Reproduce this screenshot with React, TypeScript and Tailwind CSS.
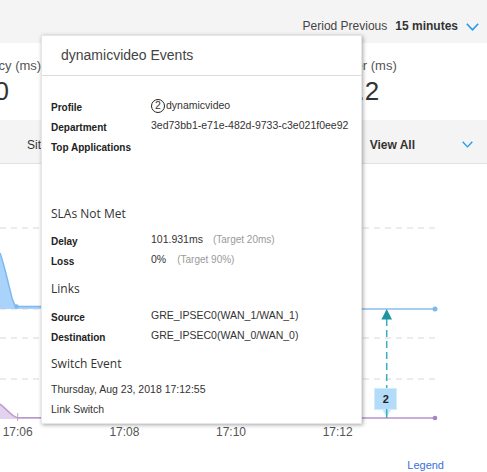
import { ReactNode } from "react";

function Chevron({ className }: { className?: string }) {
  return (
    <svg viewBox="0 0 13 8" className={className} fill="none">
      <polyline points="0.8,0.8 6.5,6.8 12.2,0.8" stroke="#1e9bf0" strokeWidth="1.6" />
    </svg>
  );
}

function Row({ label, children }: { label: string; children: ReactNode }) {
  return (
    <div className="flex h-[20px] items-center">
      <div className="w-[100px] shrink-0 text-[10px] font-bold text-[#222]">{label}</div>
      <div className="mb-[3px] flex items-center text-[10.5px] text-[#333]">{children}</div>
    </div>
  );
}

function Heading({ children, className }: { children: ReactNode; className: string }) {
  return (
    <div className={`flex h-[20px] items-center font-['Open_Sans',sans-serif] text-[12px] text-[#333] ${className}`}>
      {children}
    </div>
  );
}

function Chart() {
  const ticks = [
    { x: 17.7, t: "17:06" },
    { x: 124.4, t: "17:08" },
    { x: 231, t: "17:10" },
    { x: 337.7, t: "17:12" },
  ];
  return (
    <svg width="487" height="282" className="block">
      {[64, 174, 215].map((y) => (
        <line key={y} x1="0" x2="435" y1={y} y2={y} stroke="#d8d8d8" strokeDasharray="6 5" />
      ))}
      <line x1="0" x2="435" y1="145" y2="145" stroke="#d8d8d8" strokeDasharray="6 5" />
      {/* blue series */}
      <path d="M0,89 C4,100 8,118 12,134 C14,140 15,142.5 17,142.5 L60,142.5 L60,145 L0,145 Z" fill="#a9d3fa" />
      <path d="M0,89 C4,100 8,118 12,134 C14,140 15,142.5 17,142.5 L60,142.5" fill="none" stroke="#7db9f0" strokeWidth="1.5" />
      <circle cx="16.5" cy="142.5" r="2.3" fill="#7db9f0" />
      <line x1="362" x2="435" y1="145" y2="145" stroke="#a6cdf3" strokeWidth="2" />
      <circle cx="435" cy="145" r="2.5" fill="#7db9f0" />
      {/* purple series */}
      <path d="M0,240 C5,244 9,248.5 13,251.5 C15,253 16,253.7 18,253.7 L60,253.7 L60,255 L0,255 Z" fill="#e2d2ec" />
      <path d="M0,240 C5,244 9,248.5 13,251.5 C15,253 16,253.7 18,253.7 L60,253.7" fill="none" stroke="#b898cf" strokeWidth="1.5" />
      <line x1="362" x2="435" y1="254" y2="254" stroke="#c9aedb" strokeWidth="2" />
      <circle cx="435" cy="254" r="2.3" fill="#a884c2" />
      {/* ticks and labels */}
      {ticks.map((k) => (
        <g key={k.t}>
          <line x1={k.x} x2={k.x} y1="249" y2="257" stroke="#b8a6c6" />
          <text x={k.x} y="272" textAnchor="middle" fontSize="12" fill="#555" fontFamily="Liberation Sans, Arial, sans-serif">
            {k.t}
          </text>
        </g>
      ))}
      {/* switch marker */}
      <line x1="386.7" x2="386.7" y1="155" y2="254" stroke="#3aaebb" strokeWidth="1.5" strokeDasharray="7 4" />
      <polygon points="386.7,145 381.4,155.5 392,155.5" fill="#1f95a3" />
      <polygon points="380.7,243 392.7,243 386.7,252.5" fill="#c4e7fb" stroke="#d6f2fd" />
      <rect x="374.5" y="224.5" width="22" height="21" fill="#b5dbfa" stroke="#cfeefd" />
      <line x1="386.7" x2="386.7" y1="245" y2="254" stroke="#3aaebb" strokeWidth="1.5" />
      <text x="385.7" y="239" textAnchor="middle" fontSize="11" fontWeight="bold" fill="#222" fontFamily="Liberation Sans, Arial, sans-serif">
        2
      </text>
    </svg>
  );
}

export default function App() {
  return (
    <div className="relative h-[472px] w-[487px] overflow-hidden bg-white font-['Liberation_Sans',Arial,sans-serif] text-[#333]">
      {/* period bar */}
      <div className="flex h-[43px] items-start justify-end bg-[#f4f4f4] pr-[8px] pt-[19px] text-[12px] leading-[15px]">
        <span className="text-[#444]">Period Previous</span>
        <span className="ml-[8px] font-bold text-[#333]">15 minutes</span>
        <Chevron className="ml-[8px] mt-[4px] h-[8px] w-[13px]" />
      </div>

      {/* metrics */}
      <div className="flex h-[77px] pt-[15px]">
        <div className="ml-[-34px] w-[373px] shrink-0">
          <div className="text-[13px] leading-[16px] text-[#555]">Latency (ms)</div>
          <div className="ml-[14px] mt-[2px] text-[26px] leading-[30px] text-[#333]">10</div>
        </div>
        <div>
          <div className="text-[13px] leading-[16px] text-[#555]">Jitter (ms)</div>
          <div className="ml-[4px] mt-[2px] text-[26px] leading-[30px] text-[#333]">0.2</div>
        </div>
      </div>

      {/* filter band */}
      <div className="flex h-[44px] items-start border-b border-[#e2e2e2] bg-[#f4f4f4] pt-[18px] text-[12px] leading-[15px]">
        <span className="ml-[27px] text-[#333]">Sites: All</span>
        <span className="ml-auto text-[#333]">Applications</span>
        <span className="ml-[8px] font-bold text-[#333]">View All</span>
        <Chevron className="ml-[47px] mr-[14px] mt-[3px] h-[7px] w-[11px]" />
      </div>

      {/* chart */}
      <Chart />
      <div className="flex justify-end pr-[43px] pt-[13px]">
        <span className="text-[11px] leading-[13px] text-[#3a6fd8]">Legend</span>
      </div>

      {/* event tooltip */}
      <div className="absolute left-[41px] top-[35px] h-[389px] w-[321px] border border-[#e6e6e6] bg-white shadow-[1px_1px_4px_rgba(0,0,0,0.35)]">
        <div className="flex h-[40px] items-center border-b border-[#dcdcdc] pl-[19px] text-[14px] text-[#444]">
          dynamicvideo Events
        </div>
        <div className="pl-[9px] pt-[21px]">
          <Row label="Profile">
            <span className="mr-[1px] flex h-[14px] w-[14px] items-center justify-center rounded-full border border-[#222] text-[10.5px] leading-none">
              2
            </span>
            dynamicvideo
          </Row>
          <Row label="Department">3ed73bb1-e71e-482d-9733-c3e021f0ee92</Row>
          <Row label="Top Applications">{""}</Row>

          <Heading className="mt-[47px]">SLAs Not Met</Heading>
          <div className="mt-[7px]">
            <Row label="Delay">
              101.931ms
              <span className="ml-[10px] text-[10px] text-[#9a9a9a]">(Target 20ms)</span>
            </Row>
            <Row label="Loss">
              0%
              <span className="ml-[11px] text-[10px] text-[#9a9a9a]">(Target 90%)</span>
            </Row>
          </div>

          <Heading className="mt-[8px]">Links</Heading>
          <div className="mt-[8px]">
            <Row label="Source">GRE_IPSEC0(WAN_1/WAN_1)</Row>
            <Row label="Destination">GRE_IPSEC0(WAN_0/WAN_0)</Row>
          </div>

          <Heading className="mt-[7px]">Switch Event</Heading>
          <div className="mt-[6px] flex h-[20px] items-center text-[10.5px] text-[#333]">
            Thursday, Aug 23, 2018 17:12:55
          </div>
          <div className="flex h-[20px] items-center text-[10.5px] text-[#333]">Link Switch</div>
        </div>
      </div>
    </div>
  );
}
